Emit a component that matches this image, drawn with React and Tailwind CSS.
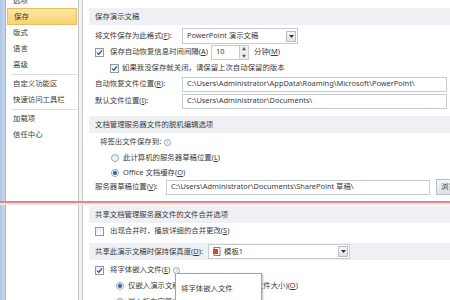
import React from "react";

const font = "font-['Noto_Sans','Noto_Sans_CJK_SC',sans-serif]";

function Header({ children, className = "" }) {
  return (
    <div className={"flex h-[17px] items-center bg-[#eef0f3] pl-[6px] text-[7.4px] text-[#3a3a3a] " + className}>
      {children}
    </div>
  );
}

function Check({ checked }) {
  return (
    <span className="flex h-[9px] w-[9px] shrink-0 items-center justify-center border border-[#8f99a6] bg-gradient-to-b from-[#e9ecf0] to-white">
      {checked && (
        <svg width="7" height="7" viewBox="0 0 7 7">
          <path d="M1 3.6 L2.8 5.3 L6 1.3" fill="none" stroke="#2e4f86" strokeWidth="1.3" />
        </svg>
      )}
    </span>
  );
}

function Radio({ checked }) {
  return (
    <span className="flex h-[8px] w-[8px] shrink-0 items-center justify-center rounded-full border border-[#9aa3ae] bg-gradient-to-b from-[#e4e8ee] to-white">
      {checked && <span className="h-[4px] w-[4px] rounded-full bg-[#2f5d96]" />}
    </span>
  );
}

function Info() {
  return (
    <span className="ml-[3px] flex h-[7px] w-[7px] items-center justify-center rounded-full border border-[#7ba7d8] text-[5px] leading-none text-[#4f86c6]">
      i
    </span>
  );
}

function Field({ value, className = "" }) {
  return (
    <div className={"flex h-[15px] items-center border border-[#c7ccd3] bg-white pl-[4px] text-[7.4px] text-[#3a3a3a] whitespace-nowrap overflow-hidden " + className}>
      {value}
    </div>
  );
}

function Arrow() {
  return (
    <span className="flex h-[11px] w-[10px] items-center justify-center border border-[#b9bec6] bg-gradient-to-b from-[#f4f5f7] to-[#dfe2e6]">
      <svg width="5" height="3" viewBox="0 0 5 3">
        <path d="M0 0 L5 0 L2.5 3 Z" fill="#333" />
      </svg>
    </span>
  );
}

const Row = ({ children, className = "" }) => (
  <div className={"flex h-[16px] items-center text-[7.4px] text-[#3a3a3a] whitespace-nowrap " + className}>{children}</div>
);

export default function App() {
  const side = ["版式", "语言", "高级"];
  return (
    <div className={"relative flex h-[300px] w-[450px] overflow-hidden bg-white " + font}>
      {/* window edge */}
      <div className="w-[6px] shrink-0 bg-gradient-to-r from-[#aec6e4] to-[#c9d9ee] border-r border-[#9fb3cc]" />

      {/* sidebar */}
      <div className="flex w-[73px] shrink-0 flex-col border-r border-[#c3c6cb] bg-white text-[7.4px] text-[#3a3a3a]">
        <div className="-mt-[6px] flex h-[13px] shrink-0 items-center pl-[7px]">选项</div>
        <div className="ml-[1px] mr-[1px] mt-[1px] flex h-[17px] shrink-0 items-center border border-[#e8be5e] bg-gradient-to-b from-[#fde7a4] to-[#fbd26f] pl-[6px]">
          保存
        </div>
        {side.map((s) => (
          <div key={s} className="flex h-[16px] shrink-0 items-center pl-[7px]">{s}</div>
        ))}
        <div className="ml-[6px] mt-[1px] mb-[1px] h-px shrink-0 bg-[#dcdee1]" />
        <div className="flex h-[16px] shrink-0 items-center pl-[7px]">自定义功能区</div>
        <div className="flex h-[16px] shrink-0 items-center pl-[7px]">快速访问工具栏</div>
        <div className="ml-[6px] mt-[1px] mb-[1px] h-px shrink-0 bg-[#dcdee1]" />
        <div className="flex h-[16px] shrink-0 items-center pl-[7px]">加载项</div>
        <div className="flex h-[16px] shrink-0 items-center pl-[7px]">信任中心</div>
      </div>
      <div className="w-[4px] shrink-0 border-r border-[#c3c6cb] bg-[#f1f2f4]" />

      {/* content */}
      <div className="min-w-0 flex-1 pl-[6px] pt-[8px]">
        <Header>保存演示文稿</Header>
        <div className="mt-[3px] pl-[6px]">
          <Row>
            <span className="w-[87px]">将文件保存为此格式(<u>F</u>):</span>
            <div className="flex h-[16px] w-[116px] items-center justify-between border border-[#c7ccd3] pl-[4px] pr-[1px]">
              <span>PowerPoint 演示文稿</span>
              <Arrow />
            </div>
          </Row>
          <Row>
            <Check checked />
            <span className="ml-[6px] w-[101px]">保存自动恢复信息时间间隔(<u>A</u>)</span>
            <div className="flex h-[15px] w-[38px] items-center border border-[#c7ccd3]">
              <span className="flex-1 pl-[4px]">10</span>
              <span className="flex h-full w-[9px] flex-col border-l border-[#c7ccd3] bg-[#eef0f3] text-[4px] leading-[7px] text-center text-[#555]">
                <span>▲</span>
                <span>▼</span>
              </span>
            </div>
            <span className="ml-[5px]">分钟(<u>M</u>)</span>
          </Row>
          <Row className="pl-[15px]">
            <Check checked />
            <span className="ml-[3px]">如果我没保存就关闭，请保留上次自动保留的版本</span>
          </Row>
          <Row>
            <span className="w-[87px]">自动恢复文件位置(<u>R</u>):</span>
            <Field className="flex-1 mr-[3px]" value="C:\Users\Administrator\AppData\Roaming\Microsoft\PowerPoint\" />
          </Row>
          <Row className="mt-[1px]">
            <span className="w-[87px]">默认文件位置(<u>I</u>):</span>
            <Field className="flex-1 mr-[3px]" value="C:\Users\Administrator\Documents\" />
          </Row>
        </div>

        <Header className="mt-[7px] h-[16px]">文档管理服务器文件的脱机编辑选项</Header>
        <div className="pl-[6px]">
          <Row className="mt-[1px] pl-[5px]">
            将签出文件保存到:<Info />
          </Row>
          <Row className="pl-[16px]">
            <Radio />
            <span className="ml-[4px]">此计算机的服务器草稿位置(<u>L</u>)</span>
          </Row>
          <Row className="-mt-[1px] pl-[16px]">
            <Radio checked />
            <span className="ml-[4px]">Office 文档缓存(<u>O</u>)</span>
          </Row>
          <Row className="-mt-[2px]">
            <span className="w-[71px] shrink-0">服务器草稿位置(<u>V</u>):</span>
            <Field className="w-[264px] shrink-0" value="C:\Users\Administrator\Documents\SharePoint 草稿\" />
            <div className="ml-[6px] flex h-[16px] w-[24px] shrink-0 items-center border border-[#b9bec6] bg-gradient-to-b from-[#f5f6f8] to-[#dfe2e6] pl-[4px]">
              浏览
            </div>
          </Row>
        </div>

        <Header className="mt-[11px] h-[16px]">共享文档管理服务器文件的文件合并选项</Header>
        <div className="pl-[6px]">
          <Row>
            <Check />
            <span className="ml-[6px]">出现合并时，播放详细的合并更改(<u>S</u>)</span>
          </Row>
        </div>
        <div className="mt-[4px] flex h-[17px] items-center bg-[#eef0f3] pl-[6px] text-[7.4px] text-[#3a3a3a] whitespace-nowrap">
          <span className="w-[113px]">共享此演示文稿时保持保真度(<u>D</u>):</span>
          <div className="flex h-[15px] w-[142px] items-center border border-[#c7ccd3] bg-white pl-[4px] pr-[1px]">
            <svg width="8" height="9" viewBox="0 0 8 9">
              <rect x="1" y="0.5" width="6" height="8" fill="#fff" stroke="#b0483a" strokeWidth="0.8" />
              <rect x="0" y="2" width="5" height="5" fill="#d24726" />
            </svg>
            <span className="ml-[3px] flex-1">模板1</span>
            <Arrow />
          </div>
        </div>
        <div className="pl-[6px]">
          <Row className="mt-[2px]">
            <Check checked />
            <span className="ml-[6px]">将字体嵌入文件(<u>E</u>)</span>
            <Info />
          </Row>
          <Row className="pl-[21px]">
            <Radio checked />
            <span className="ml-[4px]">仅嵌入演示文稿中使用的字符(适于减小文件大小)(<u>O</u>)</span>
          </Row>
          <Row className="pl-[21px]">
            <Radio />
            <span className="ml-[4px]">嵌入所有字符(适于其他人编辑)(<u>C</u>)</span>
          </Row>
        </div>
      </div>

      {/* red annotation line */}
      <div className="absolute left-0 right-0 top-[201px] h-[2px] bg-[#d78a8e]" />
      <div className="absolute left-0 right-0 top-[203px] h-[2px] bg-[#f6e1e2]" />

      {/* tooltip */}
      <div className="absolute left-[175px] top-[273px] h-[32px] w-[87px] border border-[#9fa4ab] bg-white pl-[5px] pt-[9px] text-[7.4px] text-[#3a3a3a] shadow-[1px_1px_2px_rgba(0,0,0,0.25)]">
        将字体嵌入文件
      </div>
    </div>
  );
}
